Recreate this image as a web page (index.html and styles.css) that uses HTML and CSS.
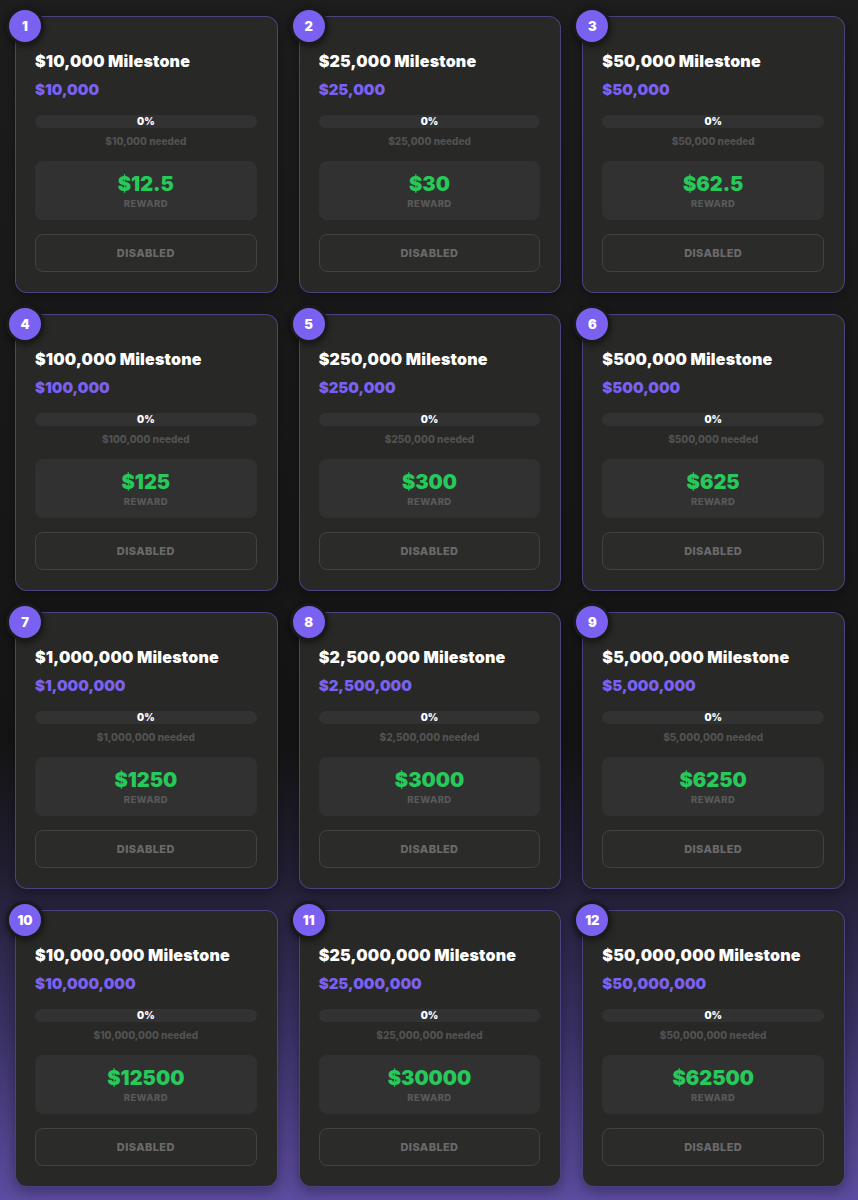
FILE: index.html
```html
<!DOCTYPE html>
<html lang="en">
<head>
<meta charset="utf-8">
<title>Milestones</title>
<link rel="stylesheet" href="styles.css">
</head>
<body>
<main class="grid">
  <div class="card"><span class="badge">1</span><h3 class="title">$10,000 Milestone</h3><div class="amount">$10,000</div><div class="bar"><span>0%</span></div><div class="needed">$10,000 needed</div><div class="reward"><div class="reward-value">$12.5</div><div class="reward-label">REWARD</div></div><button class="btn" disabled>DISABLED</button></div>
  <div class="card"><span class="badge">2</span><h3 class="title">$25,000 Milestone</h3><div class="amount">$25,000</div><div class="bar"><span>0%</span></div><div class="needed">$25,000 needed</div><div class="reward"><div class="reward-value">$30</div><div class="reward-label">REWARD</div></div><button class="btn" disabled>DISABLED</button></div>
  <div class="card"><span class="badge">3</span><h3 class="title">$50,000 Milestone</h3><div class="amount">$50,000</div><div class="bar"><span>0%</span></div><div class="needed">$50,000 needed</div><div class="reward"><div class="reward-value">$62.5</div><div class="reward-label">REWARD</div></div><button class="btn" disabled>DISABLED</button></div>
  <div class="card"><span class="badge">4</span><h3 class="title">$100,000 Milestone</h3><div class="amount">$100,000</div><div class="bar"><span>0%</span></div><div class="needed">$100,000 needed</div><div class="reward"><div class="reward-value">$125</div><div class="reward-label">REWARD</div></div><button class="btn" disabled>DISABLED</button></div>
  <div class="card"><span class="badge">5</span><h3 class="title">$250,000 Milestone</h3><div class="amount">$250,000</div><div class="bar"><span>0%</span></div><div class="needed">$250,000 needed</div><div class="reward"><div class="reward-value">$300</div><div class="reward-label">REWARD</div></div><button class="btn" disabled>DISABLED</button></div>
  <div class="card"><span class="badge">6</span><h3 class="title">$500,000 Milestone</h3><div class="amount">$500,000</div><div class="bar"><span>0%</span></div><div class="needed">$500,000 needed</div><div class="reward"><div class="reward-value">$625</div><div class="reward-label">REWARD</div></div><button class="btn" disabled>DISABLED</button></div>
  <div class="card"><span class="badge">7</span><h3 class="title">$1,000,000 Milestone</h3><div class="amount">$1,000,000</div><div class="bar"><span>0%</span></div><div class="needed">$1,000,000 needed</div><div class="reward"><div class="reward-value">$1250</div><div class="reward-label">REWARD</div></div><button class="btn" disabled>DISABLED</button></div>
  <div class="card"><span class="badge">8</span><h3 class="title">$2,500,000 Milestone</h3><div class="amount">$2,500,000</div><div class="bar"><span>0%</span></div><div class="needed">$2,500,000 needed</div><div class="reward"><div class="reward-value">$3000</div><div class="reward-label">REWARD</div></div><button class="btn" disabled>DISABLED</button></div>
  <div class="card"><span class="badge">9</span><h3 class="title">$5,000,000 Milestone</h3><div class="amount">$5,000,000</div><div class="bar"><span>0%</span></div><div class="needed">$5,000,000 needed</div><div class="reward"><div class="reward-value">$6250</div><div class="reward-label">REWARD</div></div><button class="btn" disabled>DISABLED</button></div>
  <div class="card"><span class="badge">10</span><h3 class="title">$10,000,000 Milestone</h3><div class="amount">$10,000,000</div><div class="bar"><span>0%</span></div><div class="needed">$10,000,000 needed</div><div class="reward"><div class="reward-value">$12500</div><div class="reward-label">REWARD</div></div><button class="btn" disabled>DISABLED</button></div>
  <div class="card"><span class="badge">11</span><h3 class="title">$25,000,000 Milestone</h3><div class="amount">$25,000,000</div><div class="bar"><span>0%</span></div><div class="needed">$25,000,000 needed</div><div class="reward"><div class="reward-value">$30000</div><div class="reward-label">REWARD</div></div><button class="btn" disabled>DISABLED</button></div>
  <div class="card"><span class="badge">12</span><h3 class="title">$50,000,000 Milestone</h3><div class="amount">$50,000,000</div><div class="bar"><span>0%</span></div><div class="needed">$50,000,000 needed</div><div class="reward"><div class="reward-value">$62500</div><div class="reward-label">REWARD</div></div><button class="btn" disabled>DISABLED</button></div>
</main>
</body>
</html>
```
FILE: styles.css
```css
html, body {
  margin: 0;
  padding: 0;
}
body {
  width: 858px;
  min-height: 1200px;
  font-family: "Inter", "Noto Sans", sans-serif;
  background: linear-gradient(180deg, #1d1d1d 0%, #181818 40%, #151515 62%, #211e31 72%, #3b3266 86%, #5d4ca0 100%);
  color: #fff;
}
.grid {
  display: grid;
  grid-template-columns: repeat(3, 1fr);
  column-gap: 21px;
  row-gap: 21px;
  padding: 16px 13px 12px 15px;
}
.card {
  position: relative;
  display: flex;
  flex-direction: column;
  background: #282826;
  border: 1px solid rgba(123, 97, 240, 0.45);
  border-radius: 12px;
  padding: 33px 20px 20px 19px;
  box-shadow: 0 4px 14px rgba(0, 0, 0, 0.35);
}
.badge {
  position: absolute;
  left: -10px;
  top: -10px;
  width: 32px;
  height: 32px;
  border-radius: 50%;
  border: 3px solid #1a1a1a;
  background: #7b61f0;
  color: #fff;
  font-size: 13px;
  font-weight: 900;
  display: flex;
  align-items: center;
  justify-content: center;
  box-shadow: 0 2px 6px rgba(0, 0, 0, 0.45);
}
.title {
  margin: 0;
  font-size: 16px;
  line-height: 22px;
  font-weight: 900;
  color: #fff;
  letter-spacing: 0.2px;
}
.amount {
  margin-top: 8px;
  font-size: 15px;
  line-height: 20px;
  font-weight: 900;
  color: #7b61f0;
}
.bar {
  margin-top: 15px;
  height: 13px;
  border-radius: 7px;
  background: #323232;
  display: flex;
  align-items: center;
  justify-content: center;
}
.bar span {
  font-size: 10px;
  line-height: 13px;
  font-weight: 900;
  color: #fff;
}
.needed {
  margin-top: 6px;
  font-size: 10px;
  line-height: 14px;
  font-weight: 800;
  color: #525252;
  text-align: center;
}
.reward {
  margin-top: 13px;
  background: #313131;
  border-radius: 8px;
  padding: 10px 0 10px;
  text-align: center;
}
.reward-value {
  font-size: 20px;
  line-height: 26px;
  font-weight: 900;
  color: #27c95a;
}
.reward-label {
  margin-top: 1px;
  font-size: 9.5px;
  line-height: 12px;
  font-weight: 800;
  color: #595959;
  letter-spacing: 0.4px;
}
.btn {
  margin-top: 14px;
  height: 38px;
  border: 1px solid #424242;
  border-radius: 8px;
  background: #2b2b2a;
  color: #6a6a6a;
  font-family: inherit;
  font-size: 11px;
  font-weight: 800;
  letter-spacing: 0.4px;
  cursor: default;
}
```
